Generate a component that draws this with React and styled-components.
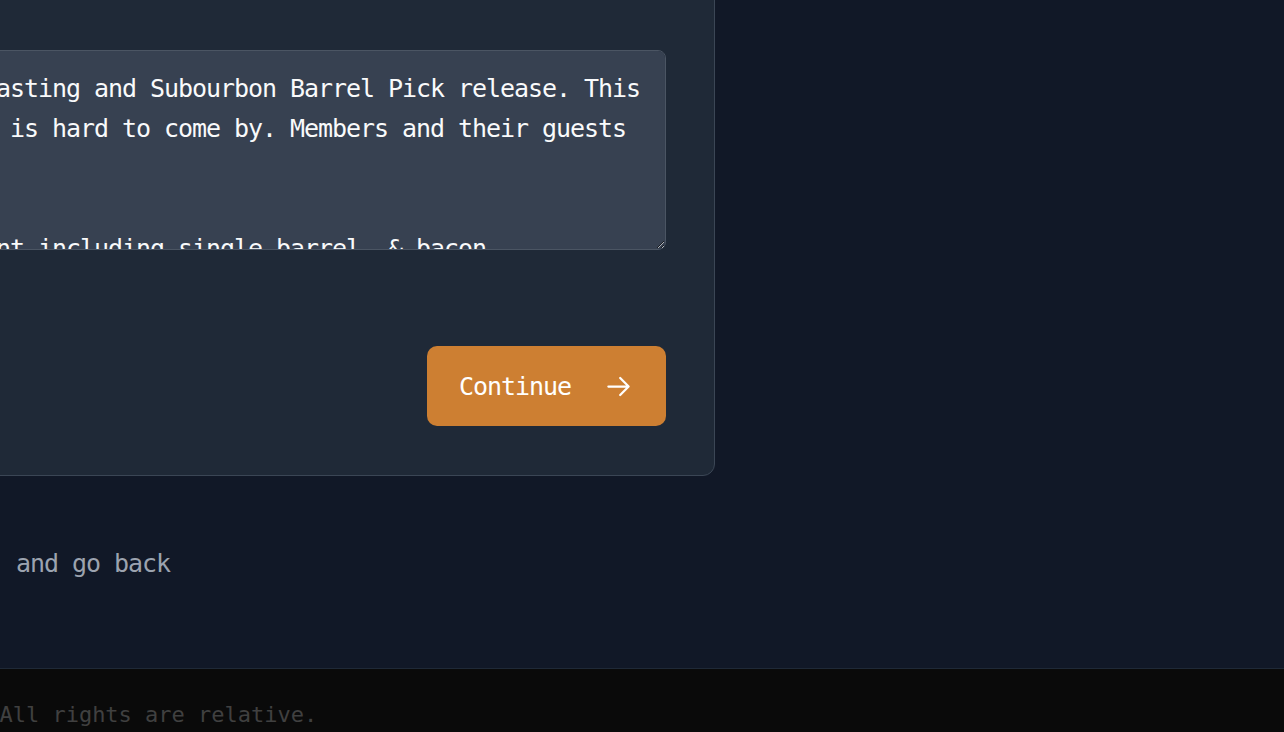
import styled, { createGlobalStyle } from "styled-components";

const description = [
  "Join us for a private bourbon tasting and Subourbon Barrel Pick release. This",
  "is a special single barrel that is hard to come by. Members and their guests",
  "are welcome.",
  "",
  "The evening features a full event including single barrel, & bacon",
  "pairings from local makers.",
].join("\n");

function ArrowRight() {
  return (
    <svg width="27" height="27" viewBox="0 0 24 24" fill="none" stroke="currentColor" strokeWidth="2" strokeLinecap="round" strokeLinejoin="round">
      <path d="M13.5 4.5 21 12l-7.5 7.5M21 12H3" />
    </svg>
  );
}

function App() {
  return (
    <>
      <GlobalStyle />
      <Page>
        <Main>
          <Column>
            <Card>
              <Label htmlFor="description">Event description</Label>
              <TextArea id="description" wrap="off" defaultValue={description} />
              <Actions>
                <PrimaryButton type="button">
                  Continue
                  <ArrowRight />
                </PrimaryButton>
              </Actions>
            </Card>
            <BackNote>
              <BackLink href="#">Cancel</BackLink> and go back
            </BackNote>
          </Column>
        </Main>
        <Footer>
          <FooterText>© 2024 Subourbon. All rights are relative.</FooterText>
        </Footer>
      </Page>
    </>
  );
}

const mono = `"DejaVu Sans Mono", "Liberation Mono", monospace`;

const GlobalStyle = createGlobalStyle`
  html, body {
    margin: 0;
    padding: 0;
    overflow: hidden;
    background: #111827;
  }
  * {
    box-sizing: border-box;
  }
`;

const Page = styled.div`
  display: flex;
  flex-direction: column;
  font-family: ${mono};
  font-size: 25px;
  letter-spacing: -1.05px;
  color: #f3f4f6;
`;

const Main = styled.main`
  display: flex;
  background: #111827;
  padding-bottom: 84px;
`;

const Column = styled.div`
  width: 1227px;
  margin-left: -512px;
  margin-top: -43px;
  display: flex;
  flex-direction: column;
`;

const Card = styled.section`
  background: #1f2937;
  border: 1px solid #3b4655;
  border-radius: 12px;
  padding: 48px 48px 49px;
  display: flex;
  flex-direction: column;
`;

const Label = styled.label`
  display: block;
  line-height: 32px;
  margin-bottom: 12px;
  color: #d1d5db;
`;

const TextArea = styled.textarea`
  height: 200px;
  width: 100%;
  padding: 18px 24px 16px;
  background: #374151;
  border: 1px solid #4b5563;
  border-radius: 8px;
  color: #f9fafb;
  font-family: ${mono};
  font-size: 25px;
  letter-spacing: -1.05px;
  line-height: 40px;
  resize: vertical;
  outline: none;
  scrollbar-width: none;

  &::-webkit-scrollbar {
    display: none;
  }
`;

const Actions = styled.div`
  display: flex;
  justify-content: flex-end;
  margin-top: 96px;
`;

const PrimaryButton = styled.button`
  display: inline-flex;
  align-items: center;
  gap: 34px;
  height: 80px;
  padding: 0 34px 0 32px;
  border: none;
  border-radius: 10px;
  background: #cd7f32;
  color: #ffffff;
  font-family: ${mono};
  font-size: 25px;
  letter-spacing: -1.05px;
  cursor: pointer;
`;

const BackNote = styled.p`
  margin: 68px 0 0;
  padding-left: 416px;
  line-height: 40px;
  color: #9ca3af;
`;

const BackLink = styled.a`
  margin-right: 14px;
  color: #cd7f32;
  text-decoration: none;
`;

const Footer = styled.footer`
  border-top: 1px solid #1f2937;
  background: #0a0a0a;
  padding: 30px 0 28px;
`;

const FooterText = styled.p`
  margin: 0 0 0 -239px;
  font-size: 22px;
  letter-spacing: 0;
  line-height: 32px;
  color: #404040;
`;

export default App;
